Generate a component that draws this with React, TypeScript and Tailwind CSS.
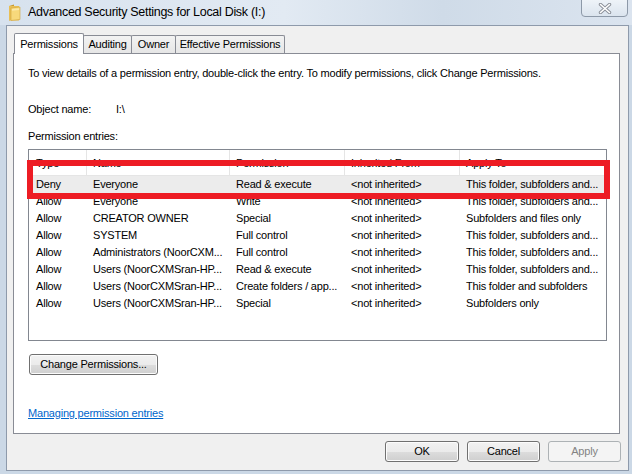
import React from 'react';

const rows = [
  ['Deny', 'Everyone', 'Read & execute', '<not inherited>', 'This folder, subfolders and...'],
  ['Allow', 'Everyone', 'Write', '<not inherited>', 'This folder, subfolders and...'],
  ['Allow', 'CREATOR OWNER', 'Special', '<not inherited>', 'Subfolders and files only'],
  ['Allow', 'SYSTEM', 'Full control', '<not inherited>', 'This folder, subfolders and...'],
  ['Allow', 'Administrators (NoorCXM...', 'Full control', '<not inherited>', 'This folder, subfolders and...'],
  ['Allow', 'Users (NoorCXMSran-HP...', 'Read & execute', '<not inherited>', 'This folder, subfolders and...'],
  ['Allow', 'Users (NoorCXMSran-HP...', 'Create folders / app...', '<not inherited>', 'This folder and subfolders'],
  ['Allow', 'Users (NoorCXMSran-HP...', 'Special', '<not inherited>', 'Subfolders only'],
];

const headers = ['Type', 'Name', 'Permission', 'Inherited From', 'Apply To'];

// column widths incl. separator, and left padding
const cols = [
  { w: 'w-[58px]', pl: 'pl-[7px]' },
  { w: 'w-[143px]', pl: 'pl-[6px]' },
  { w: 'w-[115px]', pl: 'pl-[6px]' },
  { w: 'w-[115px]', pl: 'pl-[6px]' },
  { w: 'flex-1', pl: 'pl-[6px]' },
];

const btn =
  'h-[21px] rounded-[3px] border border-[#707070] bg-[linear-gradient(to_bottom,#f2f2f2_0%,#ebebeb_50%,#dddddd_50%,#cfcfcf_100%)] shadow-[inset_0_0_0_1px_#fcfcfc] flex items-center justify-center';

function FolderIcon() {
  return (
    <svg width="13" height="17" viewBox="0 0 13 17">
      <path d="M1 2 L6 0.5 L6 15 L1 16.5 Z" fill="#c99a2e" />
      <path d="M1 2 L11 2 L11 16.5 L1 16.5 Z" fill="#e9bf55" />
      <path d="M3 4 L12 3 L12 15.5 L3 16.5 Z" fill="#f7d97c" stroke="#d2a43c" strokeWidth="0.6" />
      <path d="M4 5 L11 4.2 L11 6 L4 6.8 Z" fill="#fbe9aa" />
    </svg>
  );
}

export default function App() {
  return (
    <div className="w-[632px] h-[474px] relative overflow-hidden bg-[#cbd8e6] flex flex-col font-['Liberation_Sans',Arial,sans-serif] text-[11px] tracking-[-0.2px] text-black">
      {/* Title bar */}
      <div className="h-[25px] flex items-center pl-[8px] bg-[linear-gradient(to_right,#d7e2ee,#e2eaf3_45%,#cfdbe8_70%,#dbe4ef)]">
        <FolderIcon />
        <span className="ml-[7px] text-[12.5px] tracking-[-0.3px] text-black">
          Advanced Security Settings for Local Disk (I:)
        </span>
      </div>
      <div className="absolute left-[581px] top-[-1px] w-[47px] h-[18px] rounded-b-[4px] border border-[#8d99a8] bg-[linear-gradient(to_bottom,#eef3f8,#dbe4ee)] flex items-center justify-center">
        <svg width="14" height="11" viewBox="0 0 14 11">
          <path d="M2.5 1.5 L11.5 9.5 M11.5 1.5 L2.5 9.5" stroke="#8a8f98" strokeWidth="3.4" strokeLinecap="round" />
          <path d="M2.5 1.5 L11.5 9.5 M11.5 1.5 L2.5 9.5" stroke="#ffffff" strokeWidth="1.6" strokeLinecap="round" />
        </svg>
      </div>

      {/* Dialog body */}
      <div className="ml-[6px] w-[623px] h-[446px] border border-[#8e9aab] bg-[#f0f0f0] pt-[7px] flex flex-col">
        {/* Tabs */}
        <div className="ml-[7px] h-[20px] flex items-end relative z-10">
          <div className="w-[70px] h-[21px] -mb-[1px] border border-b-0 border-[#898c95] bg-white rounded-t-[2px] flex items-center justify-center">
            Permissions
          </div>
          {[
            ['Auditing', 'w-[49px]'],
            ['Owner', 'w-[45px]'],
            ['Effective Permissions', 'w-[110px]'],
          ].map(([t, w]) => (
            <div
              key={t}
              className={`${w} h-[18px] -ml-px border border-b-0 border-[#898c95] rounded-t-[2px] bg-[linear-gradient(to_bottom,#f3f3f3,#e6e6e6)] flex items-center justify-center`}
            >
              {t}
            </div>
          ))}
        </div>

        {/* Tab panel */}
        <div className="ml-[6px] w-[607px] h-[381px] border border-[#898c95] bg-white pl-[14px] flex flex-col">
          <p className="mt-[12px] leading-[14px]">
            To view details of a permission entry, double-click the entry. To modify permissions, click Change
            Permissions.
          </p>
          <div className="mt-[22px] leading-[14px] flex">
            <span className="w-[88px]">Object name:</span>
            <span>I:\</span>
          </div>
          <p className="mt-[13px] leading-[14px]">Permission entries:</p>

          <div className="mt-[6px] w-[579px] h-[192px] border border-[#828790] flex flex-col">
            <div className="h-[26px] flex border-b border-[#e5e5e5]">
              {headers.map((h, i) => (
                <div
                  key={h}
                  className={`${cols[i].w} ${cols[i].pl} ${i < 4 ? 'border-r border-[#e5e5e5]' : ''} flex items-center pt-[2px]`}
                >
                  {h}
                </div>
              ))}
            </div>
            {rows.map((r, ri) => (
              <div key={ri} className={`h-[17px] flex items-center ${ri === 0 ? 'bg-[#ececec]' : ''}`}>
                {r.map((c, ci) => (
                  <div key={ci} className={`${cols[ci].w} ${cols[ci].pl} whitespace-nowrap overflow-hidden`}>
                    {c}
                  </div>
                ))}
              </div>
            ))}
          </div>

          <div className={`${btn} mt-[13px] ml-[1px] w-[129px]`}>Change Permissions...</div>

          <a className="mt-[31px] leading-[14px] text-[#0066cc] underline self-start cursor-pointer">
            Managing permission entries
          </a>
        </div>

        {/* Dialog buttons */}
        <div className="mt-[7px] pr-[7px] flex justify-end gap-[8px]">
          <div className={`${btn} w-[74px]`}>OK</div>
          <div className={`${btn} w-[73px]`}>Cancel</div>
          <div className="w-[73px] h-[21px] rounded-[3px] border border-[#adb2b5] bg-[#f4f4f4] text-[#838383] flex items-center justify-center">
            Apply
          </div>
        </div>
      </div>

      {/* Red highlight annotation */}
      <div className="absolute left-[27px] top-[160px] w-[583px] h-[39px] border-[6px] border-[#ed1c24]" />
    </div>
  );
}
